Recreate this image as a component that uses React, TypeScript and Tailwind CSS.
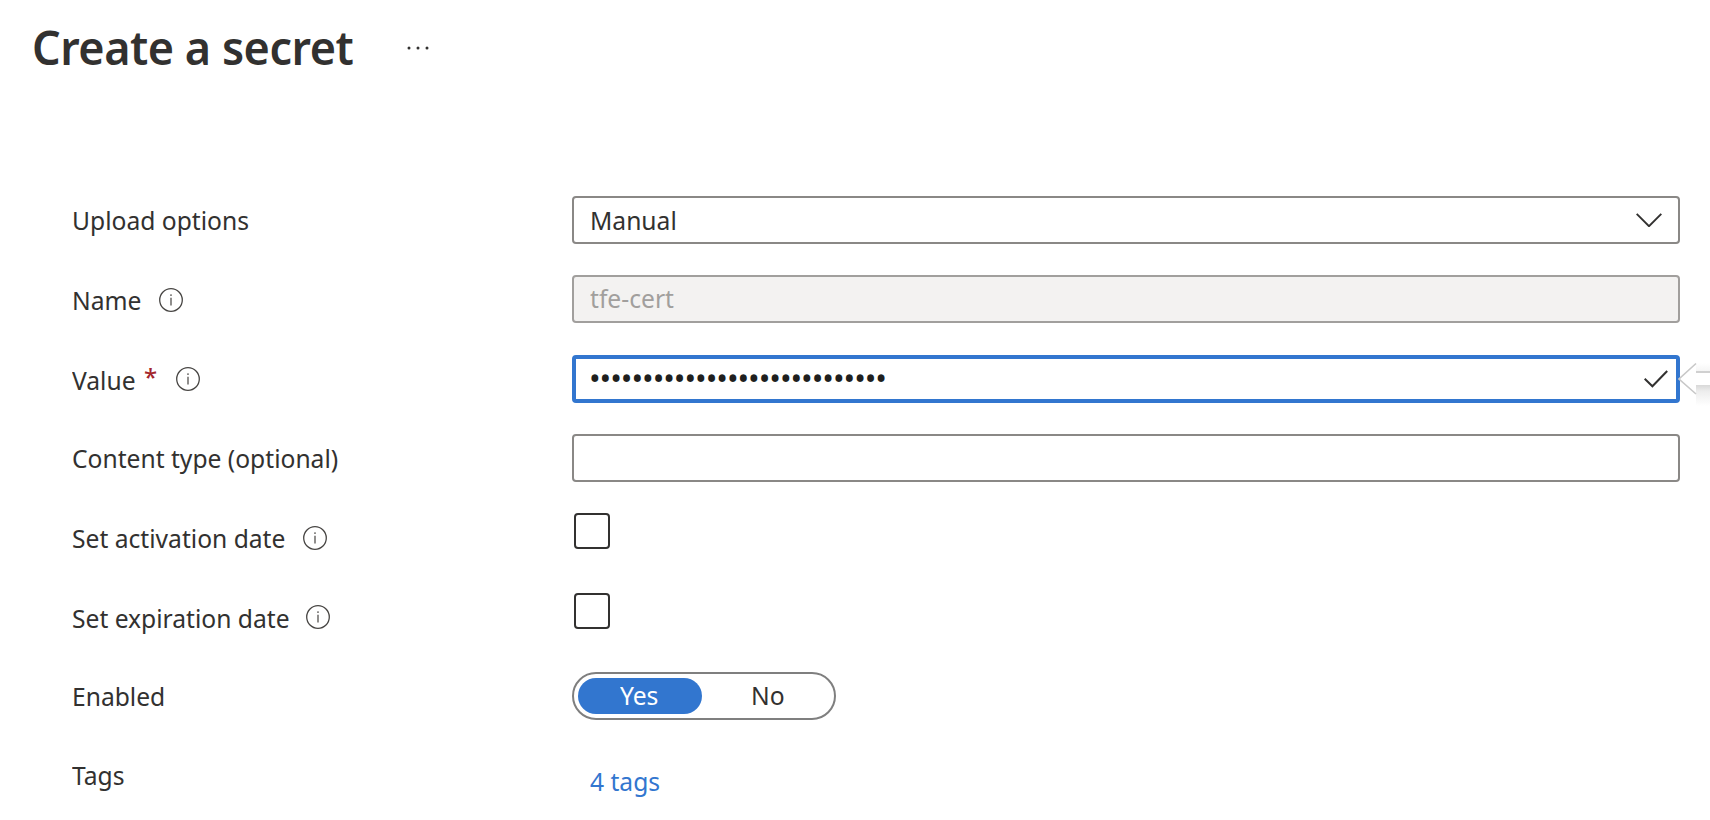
import type { ReactNode } from "react";

function Text({ className = "", children }: { className?: string; children: ReactNode }) {
  return (
    <span className={`block origin-left scale-x-[0.947] whitespace-nowrap ${className}`}>{children}</span>
  );
}

function InfoIcon({ className }: { className: string }) {
  return (
    <svg viewBox="0 0 24 24" className={`size-6 shrink-0 ${className}`} fill="none">
      <circle cx="12" cy="12" r="11.3" stroke="#484644" strokeWidth="1.3" />
      <path d="M12 9.8v7.8" stroke="#605e5c" strokeWidth="1.4" />
      <circle cx="12" cy="7.1" r="0.95" fill="#605e5c" />
    </svg>
  );
}

function Row({ className, label, children }: { className: string; label: ReactNode; children: ReactNode }) {
  return (
    <div className={`flex items-start ${className}`}>
      <div className="flex w-[500px] shrink-0 items-start">{label}</div>
      {children}
    </div>
  );
}

export default function App() {
  return (
    <main className="flex h-[820px] w-[1710px] flex-col overflow-hidden bg-white font-['Noto_Sans',sans-serif] text-[26px] leading-[36px] text-[#323130]">
      <header className="flex h-[196px] items-start pl-[32px]">
        <h1 className="w-[374px] shrink-0 origin-left scale-x-[0.957] pt-[15px] text-[47px] leading-[64px] font-semibold tracking-[-0.5px] whitespace-nowrap">
          Create a secret
        </h1>
        <svg viewBox="0 0 24 6" className="mt-[45px] h-[6px] w-[24px]" fill="#323130">
          <circle cx="3" cy="3" r="1.5" />
          <circle cx="12" cy="3" r="1.5" />
          <circle cx="21" cy="3" r="1.5" />
        </svg>
      </header>

      <form className="flex flex-col pl-[72px]">
        <Row className="h-[79px]" label={<Text className="pt-[6px]">Upload options</Text>}>
          <div className="flex h-12 w-[1108px] items-start justify-between rounded-[4px] border-2 border-[#8a8886] pt-1 pr-4 pl-4">
            <Text>Manual</Text>
            <svg viewBox="0 0 26 14" className="mt-[11px] h-[14px] w-[26px]" fill="none">
              <path d="M0.7 0.9 13 13.2 25.3 0.9" stroke="#323130" strokeWidth="1.9" />
            </svg>
          </div>
        </Row>

        <Row
          className="h-[80px]"
          label={
            <>
              <Text className="w-[87px] pt-[7px]">Name</Text>
              <InfoIcon className="mt-[13px]" />
            </>
          }
        >
          <div className="h-12 w-[1108px] rounded-[4px] border-2 border-[#a19f9d] bg-[#f3f2f1] pt-[3px] pl-4 text-[#a19f9d]">
            <Text>tfe-cert</Text>
          </div>
        </Row>

        <Row
          className="h-[79px]"
          label={
            <>
              <Text className="w-[72px] pt-[7px]">Value</Text>
              <span className="w-[32px] pt-1 text-[24px] font-medium text-[#a4262c]">*</span>
              <InfoIcon className="mt-3" />
            </>
          }
        >
          <div className="flex h-12 w-[1108px] items-start justify-between rounded-[4px] border-4 border-[#3276cf] pr-2 pl-[13px]">
            <span className="pt-px text-[31px] tracking-[-1.05px] text-[#201f1e]">••••••••••••••••••••••••••••</span>
            <svg viewBox="0 0 24 18" className="mt-[11px] h-[18px] w-[24px]" fill="none">
              <path d="M0.7 8.8 8.4 16.3 23.2 1" stroke="#323130" strokeWidth="2" />
            </svg>
          </div>
          <svg viewBox="-2 0 32 56" className="mt-[-4px] -ml-[2px] h-[56px] w-[32px] shrink-0" fill="none">
            <defs>
              <linearGradient id="below" x1="0" y1="0" x2="0" y2="1">
                <stop offset="0" stopColor="#d8d8d8" />
                <stop offset="0.3" stopColor="#ededed" />
                <stop offset="1" stopColor="#ffffff" />
              </linearGradient>
              <linearGradient id="above" x1="0" y1="0" x2="0" y2="1">
                <stop offset="0" stopColor="#ffffff" />
                <stop offset="1" stopColor="#f5f5f5" />
              </linearGradient>
            </defs>
            <path d="M16 12h14v8H16z" fill="url(#above)" />
            <path d="M16 34h14v21H16z" fill="url(#below)" />
            <path d="M16 21h14" stroke="#d0d0d0" strokeWidth="2" />
            <path d="M16 12.5 -1 28 16 43" stroke="#c8c8c8" strokeWidth="1.6" />
          </svg>
        </Row>

        <Row className="h-[79px]" label={<Text className="pt-[6px]">Content type (optional)</Text>}>
          <div className="h-12 w-[1108px] rounded-[4px] border-2 border-[#8a8886]" />
        </Row>

        <Row
          className="h-[80px]"
          label={
            <>
              <Text className="w-[231px] pt-[7px]">Set activation date</Text>
              <InfoIcon className="mt-[13px]" />
            </>
          }
        >
          <div className="ml-[2px] size-9 rounded-[4px] border-2 border-[#323130]" />
        </Row>

        <Row
          className="h-[79px]"
          label={
            <>
              <Text className="w-[234px] pt-[7px]">Set expiration date</Text>
              <InfoIcon className="mt-3" />
            </>
          }
        >
          <div className="ml-[2px] size-9 rounded-[4px] border-2 border-[#323130]" />
        </Row>

        <Row className="h-[79px]" label={<Text className="pt-[6px]">Enabled</Text>}>
          <div className="flex h-12 w-[264px] rounded-full border-2 border-[#7f7f7f] p-1">
            <div className="flex h-9 w-[124px] shrink-0 justify-center rounded-full bg-[#3276cf] leading-[34px] text-white">
              <Text>Yes</Text>
            </div>
            <div className="flex h-9 grow justify-center pl-[6px] leading-[34px]">
              <Text>No</Text>
            </div>
          </div>
        </Row>

        <Row className="h-[69px]" label={<Text className="pt-[6px]">Tags</Text>}>
          <a className="pt-3 pl-[18px] text-[#3276cf]">
            <Text>4 tags</Text>
          </a>
        </Row>
      </form>
    </main>
  );
}
